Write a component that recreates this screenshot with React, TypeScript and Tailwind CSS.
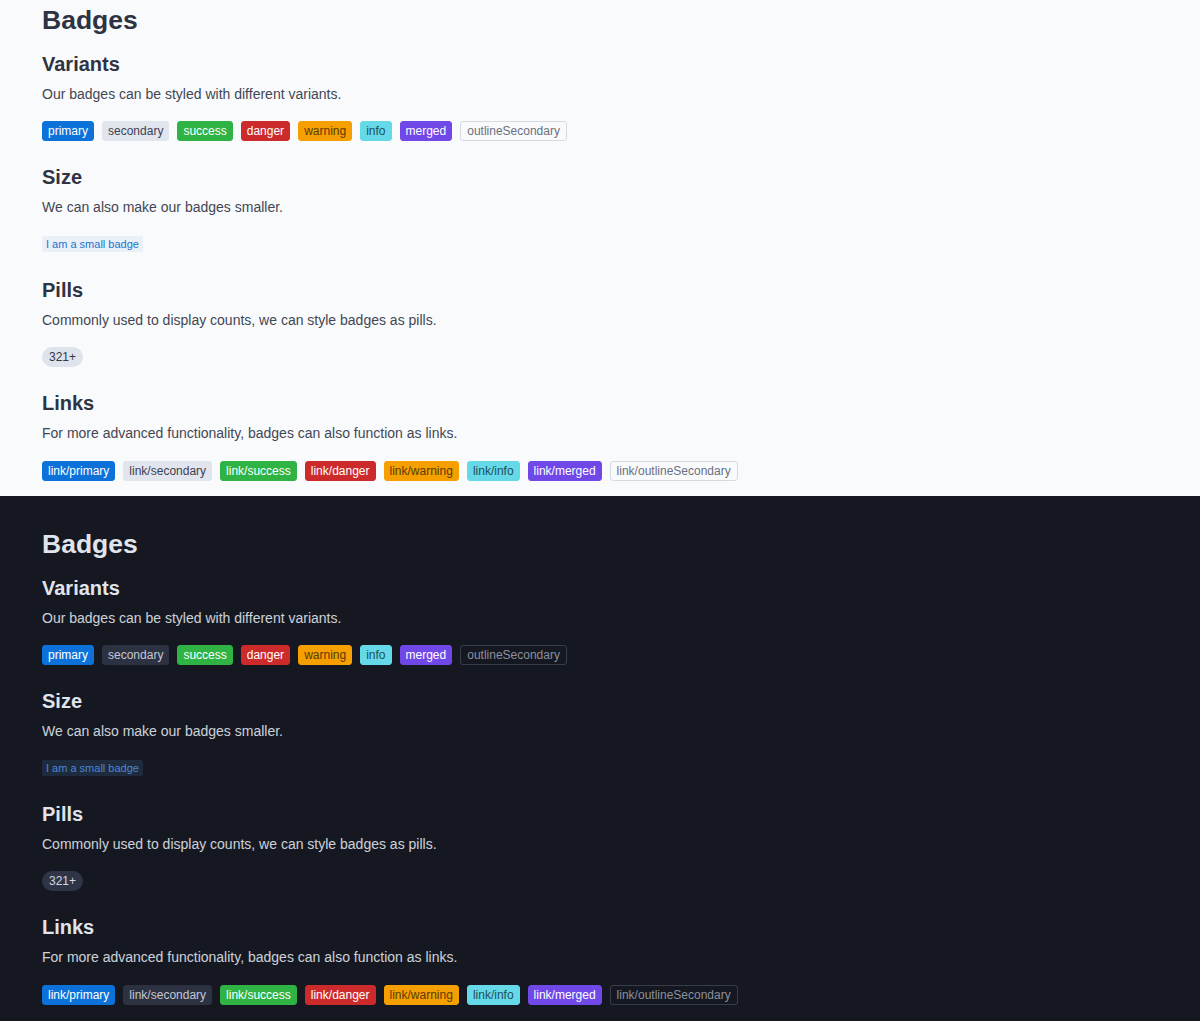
import React from "react";

type Theme = "light" | "dark";

type Variant =
  | "primary"
  | "secondary"
  | "success"
  | "danger"
  | "warning"
  | "info"
  | "merged"
  | "outlineSecondary";

const variants: Variant[] = [
  "primary",
  "secondary",
  "success",
  "danger",
  "warning",
  "info",
  "merged",
  "outlineSecondary",
];

const variantClass = (v: Variant, theme: Theme) => {
  switch (v) {
    case "primary":
      return "bg-[#0c72d9] text-white border-[#0c72d9] px-[5px]";
    case "secondary":
      return theme === "light"
        ? "bg-[#e1e5ee] text-[#3d4152] border-[#e1e5ee] px-[5px]"
        : "bg-[#2d3243] text-[#c3c7d2] border-[#2d3243] px-[5px]";
    case "success":
      return "bg-[#2fb344] text-white border-[#2fb344] px-[5px]";
    case "danger":
      return "bg-[#cd2b2b] text-white border-[#cd2b2b] px-[5px]";
    case "warning":
      return "bg-[#f59f00] text-[#5a3b05] border-[#f59f00] px-[5px]";
    case "info":
      return "bg-[#66d9e8] text-[#20505b] border-[#66d9e8] px-[5px]";
    case "merged":
      return "bg-[#7048e8] text-white border-[#7048e8] px-[5px]";
    case "outlineSecondary":
      return theme === "light"
        ? "bg-transparent text-[#6b7080] border-[#d6dae3] px-1.5"
        : "bg-transparent text-[#8b909e] border-[#383d4c] px-1.5";
  }
};

const Badge = ({
  variant,
  theme,
  children,
}: {
  variant: Variant;
  theme: Theme;
  children: React.ReactNode;
}) => (
  <span
    className={`inline-flex h-5 items-center rounded-[3px] border text-xs leading-none ${variantClass(
      variant,
      theme
    )}`}
  >
    {children}
  </span>
);

const Section = ({
  title,
  text,
  children,
}: {
  title: string;
  text: string;
  children: React.ReactNode;
}) => (
  <div className="mb-6 last:mb-0">
    <h2 className="text-xl font-bold leading-[25px]">{title}</h2>
    <p className="mt-[7px] text-sm leading-5 opacity-90">{text}</p>
    <div className="mt-[17px] flex h-5 items-center gap-2">{children}</div>
  </div>
);

const Panel = ({ theme }: { theme: Theme }) => {
  const light = theme === "light";
  return (
    <div
      className={`px-[42px] pb-4 ${
        light
          ? "bg-[#f8fafc] pt-1 text-[#2f3242]"
          : "bg-[#151821] pt-8 text-[#e0e4ec]"
      }`}
    >
      <h1 className="text-[26.5px] font-bold leading-8">Badges</h1>
      <div className="mt-4">
        <Section
          title="Variants"
          text="Our badges can be styled with different variants."
        >
          {variants.map((v) => (
            <Badge key={v} variant={v} theme={theme}>
              {v}
            </Badge>
          ))}
        </Section>
        <Section title="Size" text="We can also make our badges smaller.">
          <span
            className={`inline-flex h-4 items-center rounded-[2px] px-1 text-[11px] leading-none ${
              light
                ? "bg-[#e9f0f8] text-[#1c74d0]"
                : "bg-[#1e2a3e] text-[#4a88d4]"
            }`}
          >
            I am a small badge
          </span>
        </Section>
        <Section
          title="Pills"
          text="Commonly used to display counts, we can style badges as pills."
        >
          <span
            className={`inline-flex h-5 items-center rounded-full px-[7px] text-xs leading-none ${
              light
                ? "bg-[#dfe3ec] text-[#33374a]"
                : "bg-[#2f3546] text-[#d3d7e0]"
            }`}
          >
            321+
          </span>
        </Section>
        <Section
          title="Links"
          text="For more advanced functionality, badges can also function as links."
        >
          {variants.map((v) => (
            <a key={v} href="#" className="no-underline">
              <Badge variant={v} theme={theme}>
                link/{v}
              </Badge>
            </a>
          ))}
        </Section>
      </div>
    </div>
  );
};

export default function App() {
  return (
    <div
      className="min-h-screen bg-[#151821]"
      style={{ fontFamily: '"Liberation Sans", Arial, sans-serif' }}
    >
      <Panel theme="light" />
      <Panel theme="dark" />
    </div>
  );
}
